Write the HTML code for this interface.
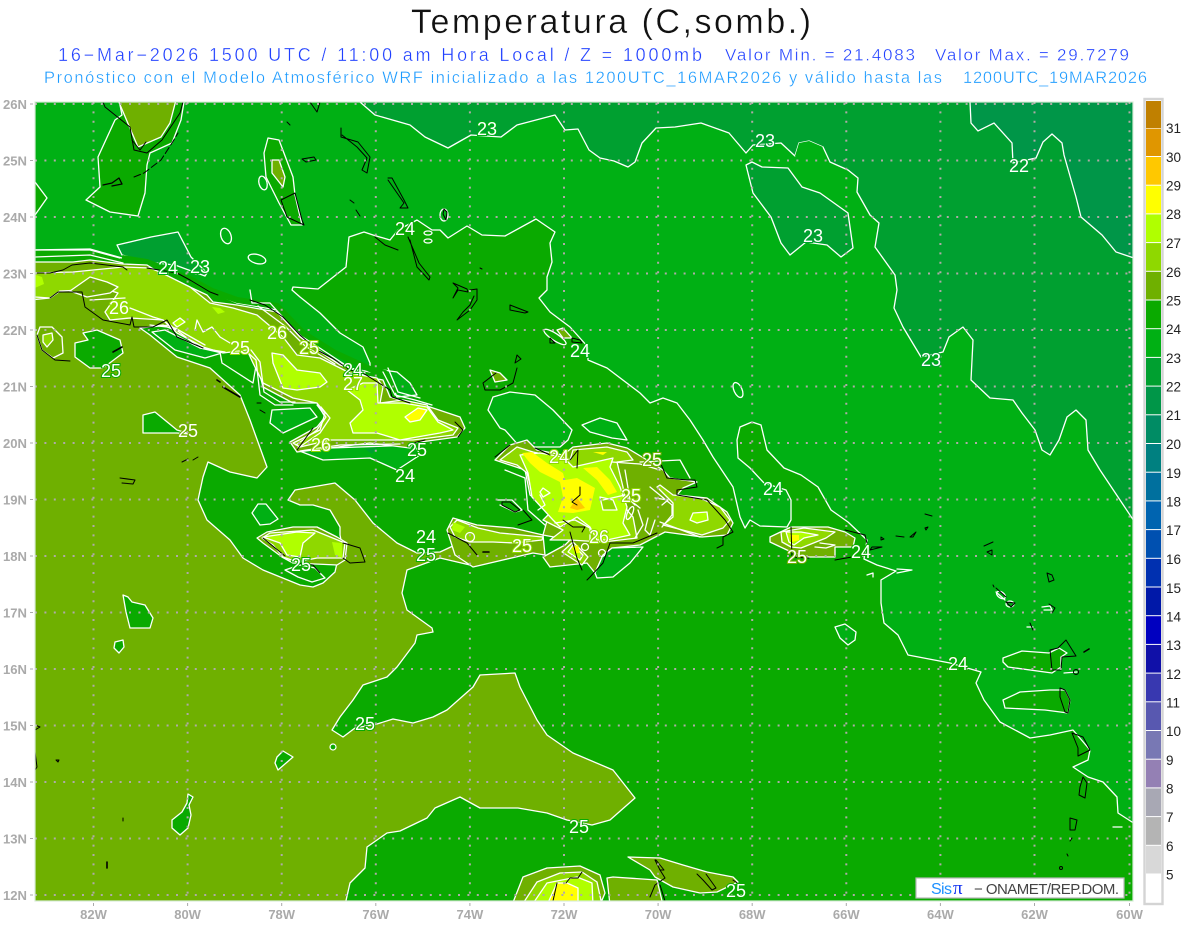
<!DOCTYPE html>
<html><head><meta charset="utf-8"><title>Temperatura</title>
<style>
html,body{margin:0;padding:0;background:#fff;width:1200px;height:927px;overflow:hidden}
svg{display:block;font-family:"Liberation Sans",sans-serif}
.w{fill:none;stroke:#fff;stroke-width:1.3;stroke-linejoin:round;stroke-linecap:round}
.s{stroke:#fff;stroke-width:1.3;stroke-linejoin:round}
.k{fill:none;stroke:#000;stroke-width:1;stroke-linejoin:round;stroke-linecap:round}
.m{fill:#00b014}.d{fill:#0aaa00}.o{fill:#6fb000}.p{fill:#8fd800}.l{fill:#b0ff00}.y{fill:#ff0}.e{fill:#00a030}
.t text{fill:#fff;font-size:18px;text-anchor:middle;paint-order:stroke;stroke-width:2px}
.tm{stroke:#00b014}.td{stroke:#0aaa00}.to{stroke:#6fb000}.tp{stroke:#8fd800}.te{stroke:#00a030}
.ax text{fill:#aaa;font-size:13px;font-weight:bold}
.cb text{fill:#222;font-size:13.5px}
.th{stroke:#fff;stroke-width:.35}
</style></head><body>
<svg width="1200" height="927" viewBox="0 0 1200 927" xmlns="http://www.w3.org/2000/svg">
<defs><clipPath id="c"><rect x="35" y="102" width="1098" height="799"/></clipPath></defs>

<text class="th" x="411" y="33" font-size="34" fill="#111" textLength="400" lengthAdjust="spacing">Temperatura (C,somb.)</text>
<text class="th" x="58" y="61" font-size="18" fill="#2040ff" textLength="644" lengthAdjust="spacing">16−Mar−2026 1500 UTC / 11:00 am Hora Local / Z = 1000mb</text>
<text class="th" x="725" y="60.5" font-size="17" fill="#2040ff" textLength="190" lengthAdjust="spacing">Valor Min. = 21.4083</text>
<text class="th" x="935" y="60.5" font-size="17" fill="#2040ff" textLength="194" lengthAdjust="spacing">Valor Max. = 29.7279</text>
<text class="th" x="44" y="83" font-size="16.5" fill="#1a9aff" textLength="898" lengthAdjust="spacing">Pronóstico con el Modelo Atmosférico WRF inicializado a las 1200UTC_16MAR2026 y válido hasta las</text>
<text class="th" x="963" y="83" font-size="16.5" fill="#1a9aff" textLength="184" lengthAdjust="spacing">1200UTC_19MAR2026</text>

<g clip-path="url(#c)">
<rect x="35" y="102" width="1098" height="799" fill="#00b014"/>
<!-- 22-23 -->
<polygon class="e s" points="360,95 360,102 375,115 410,125 425,137 448,148 471,135 501,137 517,125 555,115 565,130 578,129 589,150 600,158 614,161 628,167 635,162 642,143 656,128 675,127 701,123 729,133 746,153 753,145 781,143 795,156 799,143 809,141 823,147 830,162 848,170 858,178 857,192 870,215 879,223 875,247 895,275 897,290 894,308 903,327 921,357 943,352 949,337 963,327 973,340 971,380 990,398 1013,400 1022,413 1035,430 1042,450 1050,455 1059,440 1067,417 1076,410 1086,420 1088,450 1100,470 1120,500 1140,530 1140,95"/>
<polygon class="m" points="809,141 823,147 799,160 795,156 799,143"/>
<polygon class="e s" points="746,165 752,162 762,167 788,168 802,187 820,193 848,213 853,248 841,257 827,245 806,242 790,255 781,243 771,217 753,193"/>
<!-- 21-22 -->
<polygon points="970,95 970,102 971,123 978,131 994,123 1012,143 1013,163 1036,158 1043,142 1052,134 1062,143 1064,155 1076,197 1081,217 1102,235 1116,252 1140,260 1140,95" fill="#009648" stroke="#fff" stroke-width="1.3"/>
<!-- top-left 22-23 patch -->
<polygon class="e s" points="117,245 151,237 178,232 191,257 207,273 205,276 175,265 147,262 122,255"/>
<!-- Florida + left lobes -->
<polygon class="d s" points="118,95 184,95 184,102 181,120 172,143 150,153 147,165 145,193 138,216 110,212 86,200 100,187 98,157 115,120 122,115"/>
<polygon class="o s" points="118,100 176,100 170,123 161,137 138,147 132,133"/>
<polygon class="d s" points="30,180 35,182 47,198 35,215 30,215"/>
<!-- Andros -->
<polygon class="d s" points="268,138 279,140 293,177 295,195 302,225 291,225 279,203 266,177 264,153"/>
<polygon class="o s" points="272,160 279,160 285,177 283,187 272,173"/>
<!-- big 24-25 -->
<polygon class="d s" points="293,287 318,289 346,267 349,237 364,232 373,235 390,240 398,230 417,220 432,230 440,230 448,238 467,226 482,235 505,236 536,219 555,232 550,243 552,262 547,277 547,290 539,298 550,312 570,327 588,347 588,360 607,368 640,393 650,403 663,398 677,403 690,420 703,440 713,457 733,487 740,517 745,528 750,520 760,526 787,527 791,520 791,500 786,490 764,483 750,468 738,458 737,440 740,427 752,422 761,425 767,450 784,468 801,475 818,487 831,510 848,522 867,540 864,559 877,565 896,571 881,580 881,603 884,623 898,635 908,655 950,663 981,672 976,683 984,700 1000,722 1030,738 1050,735 1073,730 1090,750 1088,760 1073,767 1088,777 1103,782 1117,797 1118,813 1132,822 1140,823 1140,905 30,905 30,250 90,249 122,258 160,268 190,280 212,292 237,303 277,310 300,335 350,368 370,372 370,363 363,347 340,333 320,313 300,297 292,290"/>
<!-- mid patches on dark -->
<polygon class="m s" points="488,410 493,397 510,392 535,395 553,410 572,430 568,440 560,447 520,447 505,430 500,428"/>
<polygon class="m s" points="582,425 600,418 617,423 627,440 612,438 590,432"/>
<polygon class="m s" points="383,370 397,372 410,383 417,395 397,397 390,380"/>
<polygon class="m s" points="272,410 310,408 317,417 283,433 270,423"/>
<polygon class="m s" points="297,450 323,460 370,458 397,470 420,455 415,445 330,448"/>
<polygon class="e" points="365,449 378,447 372,454"/>
<polygon class="m s" points="152,332 175,350 205,358 222,353 200,348 165,330"/>
<polygon class="m s" points="835,627 845,624 856,632 855,640 848,645 840,638"/>
<polygon class="m s" points="252,513 258,504 266,504 278,519 270,524 260,525"/>
<!-- Antilles dark -->
<polygon class="d s" points="1003,658 1022,651 1049,653 1059,648 1067,653 1061,657 1061,667 1052,673 1008,667 1003,662"/>
<polygon class="d s" points="1003,700 1020,692 1050,690 1065,690 1070,700 1068,713 1045,710 1005,708"/>
<!-- West olive -->
<polyline points="122,258 147,262 190,279 212,291 237,300 277,306 303,333 335,353 370,369 385,373 395,393" fill="none" stroke="#0aaa00" stroke-width="6"/>
<polygon class="o s" points="30,262 73,262 90,260 123,264 147,265 160,273 207,295 213,302 237,305 277,312 300,337 330,358 367,377 383,380 390,397 410,403 430,407 460,417 465,428 457,437 413,443 410,448 370,443 330,448 297,452 290,442 317,427 325,417 317,403 293,403 263,387 257,363 247,350 220,340 197,340 163,325 140,328 150,335 177,357 210,368 240,395 250,420 267,467 257,478 230,472 208,462 203,477 198,500 207,520 230,540 243,558 263,570 300,585 313,587 323,583 335,572 337,563 345,560 340,535 340,527 330,510 313,505 300,505 288,500 295,490 335,483 355,500 373,523 397,543 417,553 440,552 455,545 470,550 465,560 470,565 440,558 407,570 402,593 407,610 432,628 433,632 417,635 415,643 397,667 387,677 363,685 353,700 340,717 332,730 343,737 355,728 377,724 393,719 413,723 433,717 447,710 473,687 480,675 515,673 520,687 537,720 547,735 573,753 613,770 635,798 610,820 592,825 567,820 547,813 518,808 500,808 480,808 460,797 435,808 427,818 400,831 387,833 367,847 365,868 350,883 345,905 30,905"/>
<circle cx="333" cy="747" r="3" fill="#0aaa00" stroke="#fff" stroke-width="1.2"/>
<!-- dark patches in olive -->
<polygon class="d s" points="75,343 88,340 83,333 97,330 120,340 123,353 103,368 90,368 75,357"/>
<polygon class="d s" points="143,415 155,412 177,430 190,434 177,433 143,433"/>
<polygon class="d s" points="222,363 253,383 257,360 247,352 220,352"/>
<polygon class="d s" points="123,595 128,597 132,602 145,605 153,618 150,628 130,628 126,612"/>
<polygon class="d s" points="115,642 123,640 124,647 119,653 114,648"/>
<polygon class="d s" points="277,757 283,751 293,757 278,770 275,763"/>
<polygon class="d s" points="188,794 193,797 189,805 191,815 188,828 180,835 172,828 172,820 182,812 187,803"/>
<!-- Guajira / Colombia -->
<polygon class="o s" points="628,857 660,858 683,865 707,872 733,877 738,882 717,892 700,893 673,887 655,877 650,870"/>
<polygon class="o s" points="607,878 613,877 657,880 663,905 610,905 608,887"/>
<polygon class="o s" points="512,905 523,877 547,868 580,866 600,875 605,893 600,905"/>
<polygon class="p s" points="522,905 537,882 560,873 582,872 597,882 602,905"/>
<polygon class="l s" points="532,905 547,883 577,877 592,883 593,905"/>
<polygon class="y s" points="547,905 557,883 567,883 578,888 578,905"/>
<!-- Cuba 26-27 -->
<polygon class="p s" points="30,273 73,272 123,267 150,268 160,272 190,287 210,303 233,308 257,315 283,337 297,355 320,358 350,373 377,378 383,387 380,403 403,400 427,405 438,420 458,428 453,435 413,440 397,440 363,440 330,440 300,447 293,443 320,430 325,413 317,403 293,398 263,383 253,363 247,350 223,353 203,347 177,333 163,320 130,318 110,320 105,312 112,302 118,293 105,289 60,291 50,298 30,300"/>
<polygon class="o s" points="90,277 107,282 118,287 110,293 87,297 70,291"/>
<polygon class="l" points="30,273 42,277 44,284 30,290"/>
<polygon class="l s" points="272,353 283,355 297,370 320,373 327,382 320,387 297,390 283,388 273,363"/>
<polygon class="l s" points="347,390 363,383 377,383 378,403 403,403 427,407 438,422 453,430 440,433 400,440 377,433 353,433 350,423 363,410 360,400"/>
<polygon class="l s" points="173,323 180,318 185,322 177,327"/>
<polygon class="l" points="212,307 220,308 225,312 218,314"/>
<polygon class="y s" points="405,417 418,408 427,410 420,420 410,422"/>
<!-- Isle of Youth -->
<polygon class="w" points="40,327 52,327 62,337 63,353 53,358 42,350 37,335"/>
<polygon class="p s" points="43,335 52,333 53,340 47,347 43,342"/>
<!-- Jamaica -->
<polygon class="o s" points="257,538 267,532 293,527 317,527 337,537 347,543 345,560 337,565 293,563 282,557 263,543"/>
<polygon class="p s" points="262,538 270,533 313,530 345,543 343,558 317,558 297,562 283,557 273,545"/>
<polygon class="l s" points="263,537 297,532 315,533 303,543 300,557 287,555 280,543"/>
<polygon class="l" points="332,542 342,543 342,558 335,555"/>
<polygon class="d s" points="285,570 300,565 315,568 325,578 312,582 298,577"/>
<!-- Hispaniola -->
<polygon class="o s" points="495,460 510,445 527,440 537,450 563,455 573,447 607,443 627,448 647,460 663,470 670,478 697,482 683,488 677,495 707,498 727,512 733,523 727,535 702,537 665,532 640,545 612,548 603,555 595,573 587,563 550,567 543,557 565,545 570,540 543,535 550,510 530,495 525,470"/>
<polygon class="o s" points="447,530 453,518 477,525 513,528 543,535 545,555 533,553 473,567 455,555"/>
<polygon class="m s" points="612,548 643,547 630,563 613,577 597,578 595,573 603,555"/>
<polygon class="p s" points="450,527 457,520 478,528 500,533 543,537 542,540 515,543 493,542 470,542 455,537"/>
<polygon class="l" points="453,522 465,527 460,533 452,530"/>
<polygon class="p s" points="500,460 517,447 533,452 570,460 573,450 607,447 627,452 633,460 617,462 623,487 627,510 633,517 637,538 603,542 570,540 550,540 563,530 543,520 550,513 533,497 527,473 517,465"/>
<polygon class="p s" points="657,487 673,503 673,517 663,525 702,535 723,528 730,520 720,507 700,498 673,495 660,485"/>
<polygon class="l s" points="520,455 540,453 563,457 573,467 613,458 610,467 620,487 627,507 623,523 630,535 607,540 597,540 590,527 577,517 560,527 553,520 532,497 528,473"/>
<polygon class="y" points="522,453 532,452 547,463 563,473 565,480 577,478 595,488 590,510 573,513 558,512 563,497 560,482 540,472 530,463"/>
<polygon class="y" points="583,468 597,467 610,480 617,492 608,495 597,480"/>
<polygon class="y" points="593,452 607,452 603,455"/>
<polygon points="570,508 577,498 585,508 577,510" fill="#ffc800"/>
<polygon class="l s" points="543,488 550,493 543,497 540,492"/>
<polygon class="p s" points="600,497 613,500 617,510 603,510"/>
<polygon class="p s" points="562,552 573,542 588,557 582,565"/>
<polygon class="l s" points="568,552 573,545 583,555 580,560"/>
<polygon class="y" points="572,547 578,545 580,553 575,553"/>
<polygon class="l s" points="693,513 707,512 708,520 697,523 690,520"/>
<!-- Puerto Rico -->
<polygon class="o s" points="770,537 791,527 828,527 845,532 855,538 853,547 835,547 835,557 806,557 787,550 770,542"/>
<polygon class="p s" points="781,532 804,528 835,532 826,538 801,548 791,547 782,542"/>
<polygon class="l s" points="786,532 801,532 818,535 804,538 794,545 789,542"/>
<polygon class="y" points="790,535 799,535 799,540 792,542"/>
<!-- small olive -->
<polygon class="o s" points="490,370 500,373 507,380 495,382"/>
<polygon class="o s" points="557,330 563,328 572,338 563,338"/>

<!-- extra white contour detail -->
<g class="w">
<ellipse cx="226" cy="236" rx="5" ry="8" transform="rotate(-20 226 236)"/>
<ellipse cx="257" cy="259" rx="9" ry="4.5" transform="rotate(15 257 259)"/>
<ellipse cx="263" cy="183" rx="4" ry="7" transform="rotate(-15 263 183)"/>
<ellipse cx="444" cy="215" rx="4" ry="6"/>
<ellipse cx="428" cy="233" rx="4" ry="2"/><ellipse cx="428" cy="241" rx="4" ry="2"/>
<ellipse cx="738" cy="390" rx="4" ry="8" transform="rotate(-25 738 390)"/>
<ellipse cx="555" cy="337" rx="13" ry="3.5" transform="rotate(33 555 337)"/>
<polyline points="35,250 90,250 120,258"/><polyline points="35,257 90,255 123,263"/>
<polyline points="250,290 252,303 270,303 290,325 310,345 340,365 365,373"/>
<polyline points="258,306 285,326 305,346 335,364"/>
<polyline points="383,372 395,395 415,400 432,405"/><polyline points="388,368 398,392 420,398"/>
<polyline points="130,308 153,317 163,320 175,330"/>
<polyline points="195,330 197,320 203,332 212,327 220,337 230,343"/>
<polyline points="140,328 170,325 200,348 225,352"/><polyline points="150,325 175,328 205,345"/>
<polyline points="247,352 256,360 260,395 275,405 293,405"/><polyline points="251,350 260,362 264,392 280,402 295,402"/>
<polyline points="317,405 326,417 317,430 296,445"/><polyline points="321,407 330,418 320,433 298,448"/>
<polyline points="35,297 50,298 60,291"/><polyline points="90,300 125,298"/>
<polyline points="300,451 340,445 400,444"/>
<circle cx="470" cy="537" r="4.5"/><circle cx="585" cy="547" r="3.5"/><circle cx="602" cy="553" r="3.5"/>
<ellipse cx="630" cy="513" rx="2.5" ry="7" transform="rotate(25 630 513)"/>
<polyline points="638,510 643,525 635,538"/><polyline points="648,518 645,530 650,535 655,520"/>
<polyline points="612,462 640,464 660,470"/><polyline points="625,470 630,500 640,508"/>
<polyline points="650,487 672,505 672,515 662,527"/><polyline points="660,522 700,537"/>
<polyline points="505,470 525,478 528,510 545,525"/><polyline points="497,500 512,500 522,510 515,512 500,505"/>
<polyline points="555,523 575,520 590,528 590,540"/><polyline points="540,495 545,505 538,510"/>
<polyline points="603,500 625,495 635,505"/><polyline points="655,498 668,500 662,505"/>
<polyline points="640,462 680,460 690,478"/>
<polyline points="820,543 835,545 826,548 815,547"/>
<polyline points="1042,607 1050,606 1052,610 1044,610"/><polyline points="1027,627 1033,627"/>
<polyline points="1064,673 1077,672"/><polyline points="1113,827 1122,827"/>
<polyline points="897,569 912,570 897,573"/><polyline points="867,575 873,573 873,577"/>
<polyline points="996,592 1005,600"/><ellipse cx="1010" cy="604" rx="4" ry="3"/><ellipse cx="1001" cy="595" rx="5" ry="3" transform="rotate(35 1001 595)"/>
</g>

<!-- black coasts -->
<g class="k">
<polyline points="103,102 105,107 130,127 134,150 147,153 162,140 180,113 183,102"/>
<polyline points="132,140 140,150 146,142"/>
<polyline points="103,185 112,183 119,178 122,184 112,186" stroke-width="1.3"/><polyline points="134,177 144,173 161,160 172,143 178,133" stroke-dasharray="7 3"/>
<polyline points="310,102 317,112 320,102"/>
<polyline points="341,128 341,137 358,142 370,157 367,173 362,170 367,158 357,147 342,135"/>
<polyline points="388,178 392,178 404,200 408,208 400,208 404,203 388,180"/>
<polyline points="281,200 295,193 302,220 304,225 287,217 281,200"/>
<polygon points="302,159 314,157 316,160 306,162"/>
<polygon points="444,209 447,212 446,220 443,214"/>
<polyline points="408,237 419,263 430,277 429,280 417,267 410,240"/>
<polyline points="375,237 385,245 398,250"/>
<polyline points="287,122 290,125"/><polyline points="350,200 354,203"/><polyline points="356,210 360,216"/>
<polygon points="453,283 467,289 468,292 458,290 453,298 458,288"/>
<polyline points="470,290 477,289 477,300 470,310 457,320 463,312 470,305 474,296"/>
<polyline points="510,305 528,312 525,313 510,310 510,305"/>
<polygon points="517,355 521,359 515,363"/>
<polyline points="517,368 513,383 500,390 485,390 483,383 496,373"/>
<polygon points="550,338 555,343 550,343"/>
<polygon points="572,338 580,340 582,343 572,342"/>
<polyline points="480,268 482,269"/>
<polyline points="35,273 50,273 63,270 72,265 90,263 123,267 127,270"/>
<polyline points="147,268 177,273 190,280 210,292 218,295"/>
<polyline points="250,300 265,305 283,317 300,335 317,350 332,358 350,370 363,373 390,390 392,397 410,403"/>
<polyline points="50,298 58,292 82,292 85,307 103,320 130,325 132,317 134,327 153,327 167,320 177,337 203,348"/>
<polyline points="455,422 463,430 458,437"/><polyline points="313,428 297,450"/><polyline points="413,443 425,440"/>
<polyline points="37,335 42,350 55,360 70,361"/>
<polyline points="217,380 220,382" stroke-width="1.6"/><polyline points="223,387 240,397" stroke-width="1.6"/><polyline points="257,403 261,403"/><polyline points="260,410 265,413"/>
<polyline points="182,462 188,459"/><polyline points="193,460 198,457"/><polyline points="113,352 122,347" stroke-width="1.6"/>
<polyline points="120,478 135,480 133,484 122,483"/>
<polyline points="495,457 510,445"/><polyline points="535,448 550,455"/><polyline points="570,460 578,450 577,468"/><polyline points="580,487 580,495 572,502 577,505"/>
<polyline points="660,462 667,478 687,480 695,480 697,487 677,490 677,495 707,500 725,520 733,532 723,537 723,545 717,548"/>
<polyline points="657,533 633,543 610,543 603,563 590,577 587,580"/>
<polygon points="502,502 510,502 520,510 515,512 502,505"/>
<polyline points="563,520 573,527 585,527 582,532"/><polyline points="570,532 577,558 582,570"/>
<polyline points="448,533 467,543 477,555"/><polyline points="483,552 489,552" stroke-width="1.6"/>
<polyline points="523,510 532,520 518,525"/>
<polyline points="343,543 350,545 360,548 365,562 350,563 343,558"/>
<polyline points="297,563 313,565 320,573"/><polyline points="263,538 285,556"/>
<polyline points="791,527 792,557 809,558"/><polyline points="845,530 865,535 867,543"/><polyline points="835,560 852,557"/>
<polygon points="870,550 882,547 872,547"/><polygon points="881,537 884,539 881,540"/><polyline points="896,536 904,537"/>
<polygon points="910,537 916,532 913,537"/><polyline points="925,514 932,516"/><polygon points="925,528 928,527 926,530"/>
<polyline points="984,546 993,542"/><polygon points="987,552 992,550 992,555"/><polyline points="993,585 994,587"/>
<polyline points="996,588 1006,597"/><polygon points="1006,602 1015,603 1011,607"/>
<polygon points="1047,573 1052,575 1054,580 1049,582"/><polyline points="1049,604 1055,608 1052,613"/><polyline points="1030,623 1033,630"/>
<polyline points="1050,650 1052,670 1061,670 1062,657 1076,656 1066,640 1058,648 1050,650"/><polyline points="1084,652 1089,649" stroke-width="1.6"/>
<circle cx="1076" cy="672" r="2.5"/>
<polygon points="1060,688 1065,690 1070,700 1068,713 1065,712 1060,697"/>
<polygon points="1072,733 1083,737 1090,750 1078,756 1078,748"/>
<polygon points="1083,777 1087,783 1085,798 1079,795 1080,787"/>
<polygon points="1070,818 1077,820 1075,830 1070,830"/>
<polyline points="1070,841 1072,838"/><polyline points="1067,854 1068,856"/><circle cx="1061" cy="868" r="1.5"/>
<polyline points="35,725 40,727 35,730"/><polyline points="35,752 37,767 35,770"/><polygon points="56,760 59,760 58,762"/>
<polyline points="123,818 123,821"/><polyline points="107,862 107,868" stroke-width="1.6"/>
<polyline points="660,870 665,878 655,885 650,897"/><polyline points="660,885 665,901"/>
<polygon points="655,860 660,870 664,870 656,860"/>
<polyline points="697,874 703,880 712,890 716,888 706,874"/>
<polyline points="733,880 740,885 737,890"/>
<polyline points="566,883 570,878 578,878 582,872"/>
<polyline points="557,883 553,901"/>
</g>

<!-- grid -->
<g stroke="#b0aaa8" stroke-width="2" stroke-dasharray="2 7.4" fill="none">
<path d="M93.5 102V901M187.6 102V901M281.7 102V901M375.8 102V901M469.9 102V901M564 102V901M658.1 102V901M752.2 102V901M846.3 102V901M940.4 102V901M1034.5 102V901M1129.5 102V901"/>
<path d="M35 104H1133M35 160.5H1133M35 217H1133M35 273.5H1133M35 330H1133M35 386.5H1133M35 443H1133M35 499.5H1133M35 556H1133M35 612.5H1133M35 669H1133M35 725.5H1133M35 782H1133M35 838.5H1133M35 895H1133"/>
</g>

<!-- contour labels -->
<g class="t">
<text class="tm" x="487" y="135">23</text><text class="te" x="765" y="147">23</text><text class="te" x="813" y="242">23</text><text class="te" x="931" y="366">23</text><text class="te" x="1019" y="172">22</text>
<text class="td" x="405" y="235">24</text><text class="tm" x="580" y="357">24</text><text class="tm" x="168" y="274">24</text><text class="tm" x="200" y="273">23</text>
<text class="tp" x="119" y="314">26</text><text class="td" x="111" y="377">25</text><text class="tp" x="277" y="339">26</text><text class="tp" x="309" y="354">25</text><text class="tp" x="240" y="354">25</text>
<text class="td" x="353" y="376">24</text><text class="tp" x="353" y="390">27</text><text class="to" x="188" y="437">25</text><text class="tp" x="321" y="451">26</text><text class="td" x="417" y="456">25</text>
<text class="td" x="405" y="482">24</text><text class="tp" x="559" y="463">24</text><text class="to" x="652" y="466">25</text><text class="tp" x="631" y="502">25</text><text class="tm" x="773" y="495">24</text>
<text class="td" x="426" y="543">24</text><text class="td" x="426" y="561">25</text><text class="tp" x="522" y="552">25</text><text class="tp" x="599" y="543">26</text><text class="td" x="301" y="571">25</text>
<text class="to" x="797" y="563">25</text><text class="td" x="861" y="558">24</text><text class="td" x="958" y="670">24</text><text class="td" x="365" y="730">25</text><text class="td" x="579" y="833">25</text><text class="td" x="736" y="897">25</text>
</g>
</g>

<!-- frame -->
<rect x="35" y="102" width="1098" height="799" fill="none" stroke="#d8ecd8" stroke-width="1.2"/>

<!-- logo -->
<rect x="916" y="878" width="208" height="20" fill="#fff" stroke="#b8b8b8" stroke-width="1.2"/>
<text x="931" y="894" font-size="16" fill="#1e90ff" textLength="21" lengthAdjust="spacing">Sis</text>
<text x="953" y="894" font-size="19" fill="#1030f0" font-family="'Liberation Serif',serif">π</text>
<text x="974" y="894" font-size="15" fill="#444" textLength="145" lengthAdjust="spacing">− ONAMET/REP.DOM.</text>

<!-- axis labels -->
<g class="ax">
<text x="3" y="109" textLength="24" lengthAdjust="spacingAndGlyphs">26N</text><text x="3" y="165.5" textLength="24" lengthAdjust="spacingAndGlyphs">25N</text><text x="3" y="222" textLength="24" lengthAdjust="spacingAndGlyphs">24N</text><text x="3" y="278.5" textLength="24" lengthAdjust="spacingAndGlyphs">23N</text><text x="3" y="335" textLength="24" lengthAdjust="spacingAndGlyphs">22N</text><text x="3" y="391.5" textLength="24" lengthAdjust="spacingAndGlyphs">21N</text><text x="3" y="448" textLength="24" lengthAdjust="spacingAndGlyphs">20N</text><text x="3" y="504.5" textLength="24" lengthAdjust="spacingAndGlyphs">19N</text><text x="3" y="561" textLength="24" lengthAdjust="spacingAndGlyphs">18N</text><text x="3" y="617.5" textLength="24" lengthAdjust="spacingAndGlyphs">17N</text><text x="3" y="674" textLength="24" lengthAdjust="spacingAndGlyphs">16N</text><text x="3" y="730.5" textLength="24" lengthAdjust="spacingAndGlyphs">15N</text><text x="3" y="787" textLength="24" lengthAdjust="spacingAndGlyphs">14N</text><text x="3" y="843.5" textLength="24" lengthAdjust="spacingAndGlyphs">13N</text><text x="3" y="900" textLength="24" lengthAdjust="spacingAndGlyphs">12N</text>
<g text-anchor="middle">
<text x="93.5" y="919">82W</text><text x="187.6" y="919">80W</text><text x="281.7" y="919">78W</text><text x="375.8" y="919">76W</text><text x="469.9" y="919">74W</text><text x="564" y="919">72W</text><text x="658.1" y="919">70W</text><text x="752.2" y="919">68W</text><text x="846.3" y="919">66W</text><text x="940.4" y="919">64W</text><text x="1034.5" y="919">62W</text><text x="1129.5" y="919">60W</text>
</g>
</g>
<g stroke="#aaa" stroke-width="1">
<path d="M30 104h3M30 160.5h3M30 217h3M30 273.5h3M30 330h3M30 386.5h3M30 443h3M30 499.5h3M30 556h3M30 612.5h3M30 669h3M30 725.5h3M30 782h3M30 838.5h3M30 895h3"/>
<path d="M93.5 903v3M187.6 903v3M281.7 903v3M375.8 903v3M469.9 903v3M564 903v3M658.1 903v3M752.2 903v3M846.3 903v3M940.4 903v3M1034.5 903v3M1129.5 903v3"/>
</g>

<!-- colorbar -->
<rect x="1144.5" y="99" width="18" height="805" fill="#fff" stroke="#d4d4d4" stroke-width="2.4"/>
<g>
<rect x="1146" y="101" width="15" height="27" fill="#c08000"/>
<rect x="1146" y="128.6" width="15" height="27.4" fill="#e09600"/>
<rect x="1146" y="157" width="15" height="27.7" fill="#ffc800"/>
<rect x="1146" y="185.7" width="15" height="27.7" fill="#ffff00"/>
<rect x="1146" y="214.4" width="15" height="27.7" fill="#b0ff00"/>
<rect x="1146" y="243.1" width="15" height="27.7" fill="#8fd800"/>
<rect x="1146" y="271.8" width="15" height="27.7" fill="#6fb000"/>
<rect x="1146" y="300.5" width="15" height="27.7" fill="#0aaa00"/>
<rect x="1146" y="329.2" width="15" height="27.7" fill="#00b014"/>
<rect x="1146" y="357.9" width="15" height="27.7" fill="#00a030"/>
<rect x="1146" y="386.6" width="15" height="27.7" fill="#009648"/>
<rect x="1146" y="415.3" width="15" height="27.7" fill="#008c64"/>
<rect x="1146" y="444" width="15" height="27.7" fill="#008080"/>
<rect x="1146" y="472.7" width="15" height="27.7" fill="#00709e"/>
<rect x="1146" y="501.4" width="15" height="27.7" fill="#0064b0"/>
<rect x="1146" y="530.1" width="15" height="27.7" fill="#0050b0"/>
<rect x="1146" y="558.8" width="15" height="27.7" fill="#0030b0"/>
<rect x="1146" y="587.5" width="15" height="27.7" fill="#0018a8"/>
<rect x="1146" y="616.2" width="15" height="27.7" fill="#0000c0"/>
<rect x="1146" y="644.9" width="15" height="27.7" fill="#1010a8"/>
<rect x="1146" y="673.6" width="15" height="27.7" fill="#3838b0"/>
<rect x="1146" y="702.3" width="15" height="27.7" fill="#5858b0"/>
<rect x="1146" y="731" width="15" height="27.7" fill="#7878b4"/>
<rect x="1146" y="759.7" width="15" height="27.7" fill="#9480b4"/>
<rect x="1146" y="788.4" width="15" height="27.7" fill="#a8a8b4"/>
<rect x="1146" y="817.1" width="15" height="27.7" fill="#b4b4b4"/>
<rect x="1146" y="845.8" width="15" height="27.7" fill="#d8d8d8"/>
<rect x="1146" y="874.5" width="15" height="27.5" fill="#ffffff"/>
</g>
<g class="cb">
<text x="1166" y="133">31</text><text x="1166" y="162">30</text><text x="1166" y="190.5">29</text><text x="1166" y="219">28</text><text x="1166" y="248">27</text><text x="1166" y="277">26</text><text x="1166" y="305.5">25</text><text x="1166" y="334">24</text><text x="1166" y="363">23</text><text x="1166" y="391.5">22</text><text x="1166" y="420">21</text><text x="1166" y="449">20</text><text x="1166" y="478">19</text><text x="1166" y="506.5">18</text><text x="1166" y="535">17</text><text x="1166" y="564">16</text><text x="1166" y="593">15</text><text x="1166" y="621.5">14</text><text x="1166" y="650">13</text><text x="1166" y="679">12</text><text x="1166" y="707.5">11</text><text x="1166" y="736">10</text><text x="1166" y="765">9</text><text x="1166" y="793.5">8</text><text x="1166" y="822">7</text><text x="1166" y="851">6</text><text x="1166" y="879.5">5</text>
</g>
</svg>
</body></html>
